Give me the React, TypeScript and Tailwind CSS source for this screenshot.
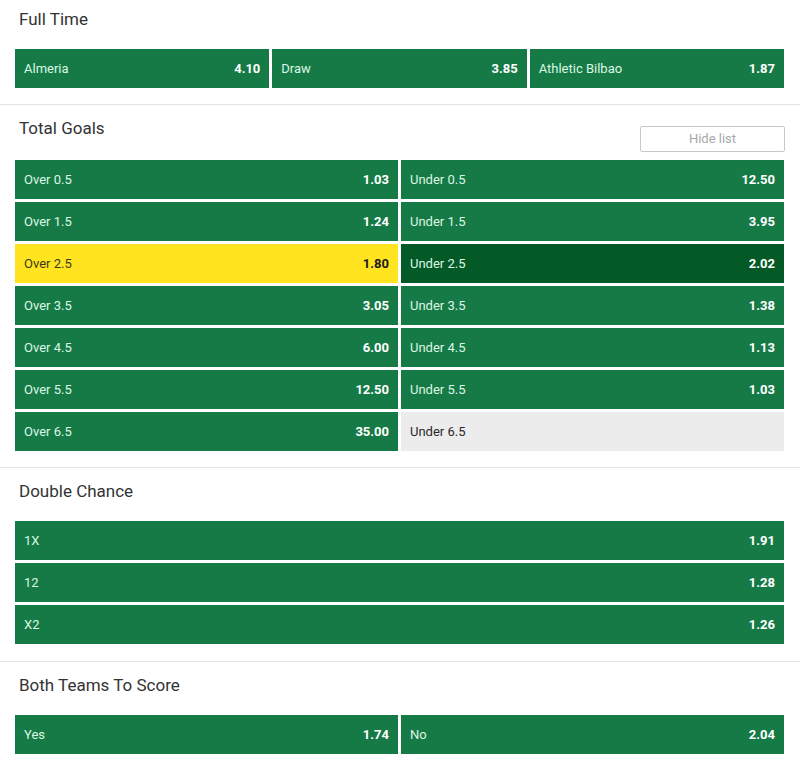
import { useState } from "react";

type Sel = { label: string; odds?: string; state?: "yellow" | "dark" | "off" };

const FULL_TIME: Sel[] = [
  { label: "Almeria", odds: "4.10" },
  { label: "Draw", odds: "3.85" },
  { label: "Athletic Bilbao", odds: "1.87" },
];

const TOTAL_GOALS: Sel[] = [
  { label: "Over 0.5", odds: "1.03" },
  { label: "Under 0.5", odds: "12.50" },
  { label: "Over 1.5", odds: "1.24" },
  { label: "Under 1.5", odds: "3.95" },
  { label: "Over 2.5", odds: "1.80", state: "yellow" },
  { label: "Under 2.5", odds: "2.02", state: "dark" },
  { label: "Over 3.5", odds: "3.05" },
  { label: "Under 3.5", odds: "1.38" },
  { label: "Over 4.5", odds: "6.00" },
  { label: "Under 4.5", odds: "1.13" },
  { label: "Over 5.5", odds: "12.50" },
  { label: "Under 5.5", odds: "1.03" },
  { label: "Over 6.5", odds: "35.00" },
  { label: "Under 6.5", state: "off" },
];

const DOUBLE_CHANCE: Sel[] = [
  { label: "1X", odds: "1.91" },
  { label: "12", odds: "1.28" },
  { label: "X2", odds: "1.26" },
];

const BTTS: Sel[] = [
  { label: "Yes", odds: "1.74" },
  { label: "No", odds: "2.04" },
];

function OddsButton({ sel }: { sel: Sel }) {
  if (sel.state === "off") {
    return (
      <div className="h-[39px] flex items-center px-[9px] bg-[#ececec] text-[13px] text-[#2a2a2a]">
        {sel.label}
      </div>
    );
  }
  const bg =
    sel.state === "yellow" ? "bg-[#ffe41f]" : sel.state === "dark" ? "bg-[#035a26]" : "bg-[#167a46]";
  const labelCls = sel.state === "yellow" ? "text-[#3a3a1a]" : "text-[#dcf7e4]";
  const oddsCls = sel.state === "yellow" ? "text-[#1a1a1a]" : "text-white";
  return (
    <div className={`h-[39px] flex items-center justify-between px-[9px] ${bg}`}>
      <span className={`text-[13px] ${labelCls}`}>{sel.label}</span>
      <span className={`text-[13px] font-bold ${oddsCls}`}>{sel.odds}</span>
    </div>
  );
}

function Section({
  title,
  children,
  first,
  last,
  roomy,
  action,
}: {
  title: string;
  children: React.ReactNode;
  first?: boolean;
  last?: boolean;
  roomy?: boolean;
  action?: React.ReactNode;
}) {
  return (
    <section
      className={`${first ? "pt-[7px]" : "pt-[11px]"} ${roomy ? "pb-[17px]" : "pb-4"} ${
        last ? "" : "border-b border-[#e2e2e2]"
      }`}
    >
      <div className="flex justify-between items-start px-[15px]">
        <h2 className="h-6 leading-6 pl-1 text-[17px] text-[#333]">{title}</h2>
        {action}
      </div>
      <div className={`${action ? "mt-2" : "mt-[18px]"} px-[15px]`}>{children}</div>
    </section>
  );
}

export default function App() {
  const [open, setOpen] = useState(true);
  return (
    <div className="w-[800px] h-[771px] bg-white overflow-hidden" style={{ fontFamily: "Roboto, 'Liberation Sans', sans-serif" }}>
      <Section title="Full Time" first>
        <div className="grid grid-cols-3 gap-[3px] w-[769px]">
          {FULL_TIME.map((s) => (
            <OddsButton key={s.label} sel={s} />
          ))}
        </div>
      </Section>

      <Section
        title="Total Goals"
        action={
          <button
            onClick={() => setOpen(!open)}
            className="mt-[10px] w-[145px] h-[26px] border border-[#c8c8c8] rounded-[2px] text-[13px] text-[#a8a8a8] bg-white"
          >
            Hide list
          </button>
        }
      >
        <div className="grid grid-cols-2 gap-[3px] w-[769px]">
          {TOTAL_GOALS.map((s) => (
            <OddsButton key={s.label} sel={s} />
          ))}
        </div>
      </Section>

      <Section title="Double Chance" roomy>
        <div className="flex flex-col gap-[3px] w-[769px]">
          {DOUBLE_CHANCE.map((s) => (
            <OddsButton key={s.label} sel={s} />
          ))}
        </div>
      </Section>

      <Section title="Both Teams To Score" last>
        <div className="grid grid-cols-2 gap-[3px] w-[769px]">
          {BTTS.map((s) => (
            <OddsButton key={s.label} sel={s} />
          ))}
        </div>
      </Section>
    </div>
  );
}
